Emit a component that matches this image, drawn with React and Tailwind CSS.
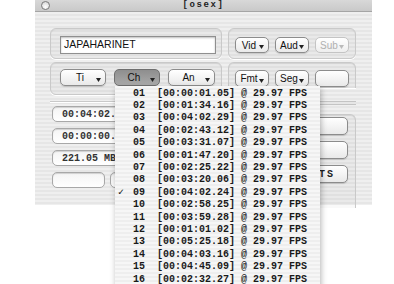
import React from 'react';

const chapters = [
  ['01', '00:00:01.05'],
  ['02', '00:01:34.16'],
  ['03', '00:04:02.29'],
  ['04', '00:02:43.12'],
  ['05', '00:03:31.07'],
  ['06', '00:01:47.20'],
  ['07', '00:02:25.22'],
  ['08', '00:03:20.06'],
  ['09', '00:04:02.24'],
  ['10', '00:02:58.25'],
  ['11', '00:03:59.28'],
  ['12', '00:01:01.02'],
  ['13', '00:05:25.18'],
  ['14', '00:04:03.16'],
  ['15', '00:04:45.09'],
  ['16', '00:02:32.27'],
];

const Arrow = ({ color = '#222' }) => (
  <svg width="5" height="4" viewBox="0 0 5 4" className="absolute right-[4px] bottom-[3px]">
    <path d="M0 0 L5 0 L2.5 4 Z" fill={color} />
  </svg>
);

const PopButton = ({ label, w, h = 'h-full', pressed, disabled, arrow = true, children }) => (
  <div
    className={`relative rounded-[5px] border flex items-center justify-center pr-[6px] text-[10px] ${
      pressed
        ? 'border-[#6f6f6f] bg-[linear-gradient(180deg,#8e8e8e,#a9a9a9)] text-[#111]'
        : disabled
        ? 'border-[#c4c4c4] bg-[linear-gradient(180deg,#ffffff,#eeeeee)] text-[#b0b0b0]'
        : 'border-[#8c8c8c] bg-[linear-gradient(180deg,#ffffff,#e9e9e9)] text-[#111] shadow-[0_1px_1px_rgba(0,0,0,0.15)]'
    } ${w} ${h}`}
    style={{ fontFamily: '"Liberation Sans", Arial, sans-serif' }}
  >
    {label}
    {children}
    {arrow && <Arrow color={disabled ? '#bbb' : '#222'} />}
  </div>
);

const Field = ({ children, w = 'w-[80px]' }) => (
  <div
    className={`h-[16px] ${w} rounded-[5px] border border-[#a8a8a8] bg-[linear-gradient(180deg,#f4f4f4,#ffffff)] shadow-[inset_0_1px_1px_rgba(0,0,0,0.15)] flex items-center pl-[9px] text-[10px] font-bold text-[#333]`}
    style={{ fontFamily: '"Liberation Mono", "DejaVu Sans Mono", monospace' }}
  >
    {children}
  </div>
);

const GroupBox = ({ className, children }) => (
  <div className={`rounded-[6px] border border-[#c9c9c9] bg-[rgba(0,0,0,0.025)] shadow-[inset_0_1px_1px_rgba(0,0,0,0.06),0_1px_0_#fff] ${className}`}>
    {children}
  </div>
);

export default function App() {
  return (
    <div className="relative w-[394px] h-[284px] bg-white overflow-hidden">
      {/* Window */}
      <div className="ml-[35px] w-[337px] h-[205px] flex flex-col bg-[repeating-linear-gradient(180deg,#efefef_0px,#efefef_2px,#e6e6e6_2px,#e6e6e6_4px)]">
        {/* Title bar */}
        <div className="relative h-[12px] flex items-start border-b border-[#a5a5a5] bg-[linear-gradient(180deg,#d8d8d8,#c9c9c9)]">
          <div className="ml-[6px] mt-[1px] w-[9px] h-[9px] rounded-full border border-[#7a7a7a] bg-[radial-gradient(circle_at_50%_70%,#ffffff,#cfcfcf)]" />
          <div
            className="flex-1 text-center text-[9px] leading-[11px] font-bold tracking-[1.6px] text-[#222] -ml-[15px]"
            style={{ fontFamily: '"Liberation Mono", monospace' }}
          >
            [osex]
          </div>
        </div>

        {/* Body */}
        <div className="flex-1 px-[15px] pt-[16px] grid grid-cols-[172px_128px] gap-x-[6px] content-start">
          {/* Row 1 */}
          <GroupBox className="h-[31px] pl-[9px] pt-[7px]">
            <div
              className="w-[156px] h-[18px] bg-white border border-[#8f8f8f] shadow-[inset_0_1px_2px_rgba(0,0,0,0.25)] flex items-center pl-[3px] text-[10.5px] text-[#111]"
              style={{ fontFamily: '"Liberation Sans", Arial, sans-serif' }}
            >
              JAPAHARINET
            </div>
          </GroupBox>
          <GroupBox className="h-[31px] pl-[6px] pt-[8px]">
            <div className="flex gap-[6px] h-[16px]">
              <PopButton label="Vid" w="w-[34px]" />
              <PopButton label="Aud" w="w-[34px]" />
              <PopButton label="Sub" w="w-[34px]" disabled />
            </div>
          </GroupBox>

          {/* Row 2 */}
          <GroupBox className="mt-[3px] h-[33px] pl-[9px] pt-[6px]">
            <div className="flex gap-[8px] h-[17px]">
              <PopButton label="Ti" w="w-[46px]" />
              <PopButton label="Ch" w="w-[46px]" pressed />
              <PopButton label="An" w="w-[47px]" />
            </div>
          </GroupBox>
          <GroupBox className="mt-[3px] h-[26px] pl-[6px] pt-[7px] rounded-b-none border-b-0">
            <div className="flex gap-[6px] h-[17px]">
              <PopButton label="Fmt" w="w-[34px]" />
              <PopButton label="Seg" w="w-[34px]" />
              <PopButton label="" w="w-[34px]" arrow={false} />
            </div>
          </GroupBox>

          {/* Row 3 left */}
          <div className="mt-[6px] pl-[2px] border-t border-[#c9c9c9] shadow-[inset_0_1px_0_#fff]">
            <div className="mt-[4px] flex flex-col gap-[6px]">
              <Field w="w-[90px]">00:04:02.</Field>
              <Field w="w-[90px]">00:00:00.</Field>
              <Field w="w-[90px]">221.05 MB</Field>
              <div className="flex gap-[5px]">
                <Field w="w-[53px]" />
                <Field w="w-[40px]" />
              </div>
            </div>
          </div>

          {/* Row 3 right */}
          <div className="flex flex-col">
            <div className="mt-[6px] h-[4px] border-y border-[#c4c4c4]" />
            <GroupBox className="mt-[9px] h-[94px] pt-[2px] pr-[7px] border-b-0 rounded-b-none">
              <div className="flex flex-col gap-[6px] items-end">
                <PopButton label="" w="w-[100px]" h="h-[18px]" arrow={false} />
                <PopButton label="" w="w-[100px]" h="h-[18px]" arrow={false} />
                <PopButton label="" w="w-[100px]" h="h-[18px]" arrow={false}>
                  <span
                    className="absolute left-[70px] font-bold tracking-[2px] text-[#222]"
                    style={{ fontFamily: '"Liberation Mono", monospace' }}
                  >
                    TS
                  </span>
                </PopButton>
              </div>
            </GroupBox>
          </div>
        </div>
      </div>

      {/* Chapter popup menu */}
      <div
        className="absolute left-[115px] top-[86px] w-[205px] h-[205px] pt-[1px] bg-[repeating-linear-gradient(180deg,#f6f6f6_0px,#f6f6f6_2px,#eeeeee_2px,#eeeeee_4px)] shadow-[1px_3px_6px_rgba(0,0,0,0.3)] text-[10px] font-bold text-[#1a1a1a]"
        style={{ fontFamily: '"Liberation Mono", "DejaVu Sans Mono", monospace' }}
      >
        {chapters.map(([n, t]) => (
          <div key={n} className="h-[12.4px] flex items-center whitespace-pre">
            <span className="w-[18px] pl-[3px]">{n === '09' ? '✓' : ''}</span>
            <span>{`${n}  [${t}] @ 29.97 FPS`}</span>
          </div>
        ))}
      </div>
    </div>
  );
}
